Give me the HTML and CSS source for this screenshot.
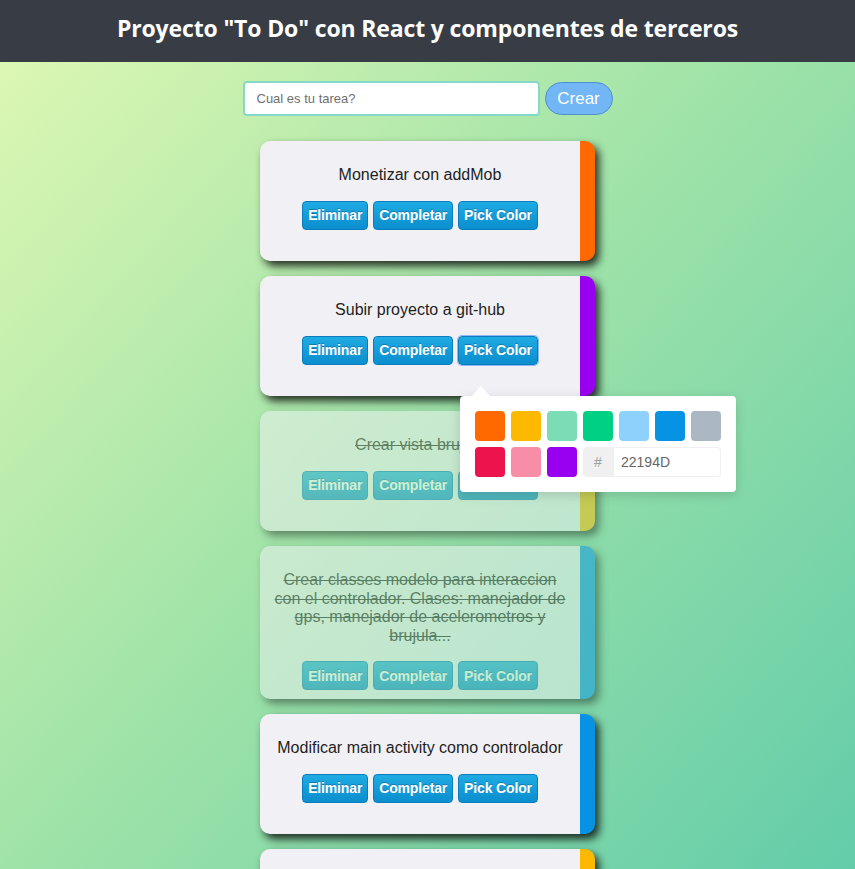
FILE: index.html
```html
<!DOCTYPE html>
<html lang="es">
<head>
<meta charset="utf-8">
<title>To Do</title>
<link rel="stylesheet" href="styles.css">
</head>
<body>
<header class="topbar">
  <h1 class="title">Proyecto "To Do" con React y componentes de terceros</h1>
</header>
<main class="page">
  <form class="new-task">
    <input class="task-input" type="text" placeholder="Cual es tu tarea?">
    <button class="create-btn" type="button">Crear</button>
  </form>
  <ul class="task-list">
    <li class="card" style="border-right-color:#FF6900">
      <p class="card-text">Monetizar con addMob</p>
      <div class="actions">
        <button class="btn" type="button">Eliminar</button>
        <button class="btn" type="button">Completar</button>
        <button class="btn" type="button">Pick Color</button>
      </div>
    </li>
    <li class="card card-open" style="border-right-color:#9900EF">
      <p class="card-text">Subir proyecto a git-hub</p>
      <div class="actions">
        <button class="btn" type="button">Eliminar</button>
        <button class="btn" type="button">Completar</button>
        <button class="btn btn-focus" type="button">Pick Color</button>
      </div>
      <div class="picker">
        <div class="picker-arrow"></div>
        <div class="swatches">
          <span class="swatch" style="background:#FF6900"></span>
          <span class="swatch" style="background:#FCB900"></span>
          <span class="swatch" style="background:#7BDCB5"></span>
          <span class="swatch" style="background:#00D084"></span>
          <span class="swatch" style="background:#8ED1FC"></span>
          <span class="swatch" style="background:#0693E3"></span>
          <span class="swatch" style="background:#ABB8C3"></span>
          <span class="swatch" style="background:#EB144C"></span>
          <span class="swatch" style="background:#F78DA7"></span>
          <span class="swatch" style="background:#9900EF"></span>
          <span class="hex">
            <span class="hash">#</span>
            <input class="hex-input" type="text" value="22194D">
          </span>
        </div>
      </div>
    </li>
    <li class="card card-done" style="border-right-color:#FCB900">
      <p class="card-text">Crear vista brujula</p>
      <div class="actions">
        <button class="btn" type="button">Eliminar</button>
        <button class="btn" type="button">Completar</button>
        <button class="btn" type="button">Pick Color</button>
      </div>
    </li>
    <li class="card card-done" style="border-right-color:#0693E3">
      <p class="card-text">Crear classes modelo para interaccion con el controlador. Clases: manejador de gps, manejador de acelerometros y brujula...</p>
      <div class="actions">
        <button class="btn" type="button">Eliminar</button>
        <button class="btn" type="button">Completar</button>
        <button class="btn" type="button">Pick Color</button>
      </div>
    </li>
    <li class="card" style="border-right-color:#0693E3">
      <p class="card-text">Modificar main activity como controlador</p>
      <div class="actions">
        <button class="btn" type="button">Eliminar</button>
        <button class="btn" type="button">Completar</button>
        <button class="btn" type="button">Pick Color</button>
      </div>
    </li>
    <li class="card" style="border-right-color:#FCB900">
      <p class="card-text">Agregar sensores</p>
      <div class="actions">
        <button class="btn" type="button">Eliminar</button>
        <button class="btn" type="button">Completar</button>
        <button class="btn" type="button">Pick Color</button>
      </div>
    </li>
  </ul>
</main>
</body>
</html>
```

FILE: styles.css
```css
* { box-sizing: border-box; }
html, body { margin: 0; padding: 0; }
body {
  font-family: "Liberation Sans", Arial, sans-serif;
  background: #5ac9aa;
  min-height: 869px;
}
.topbar {
  background: #383c44;
  height: 62px;
  display: flex;
  align-items: center;
  justify-content: center;
}
.title {
  margin: 0;
  color: #fff;
  font-family: "Open Sans", "Noto Sans", sans-serif;
  font-weight: 700;
  font-size: 23px;
  letter-spacing: -0.15px;
  padding-bottom: 7px;
}
.page {
  background: linear-gradient(to bottom right, #dcf7b3 0%, #9de2a8 45%, #5ac9aa 100%);
  min-height: 807px;
  padding: 19px 0 40px;
  display: flex;
  flex-direction: column;
  align-items: center;
}
.new-task {
  display: flex;
  align-items: center;
  gap: 5px;
  margin: 0 0 25px;
}
.task-input {
  width: 297px;
  height: 35px;
  border: 2px solid #86d8c8;
  border-radius: 4px;
  padding: 0 12px;
  font-family: "Liberation Sans", Arial, sans-serif;
  font-size: 13px;
  background: #fff;
  outline: none;
}
.task-input::placeholder { color: #6f6f6f; }
.create-btn {
  width: 68px;
  height: 33px;
  border-radius: 17px;
  border: 1px solid #4f8fd0;
  background: #72b6f6;
  color: #fff;
  font-family: "Liberation Sans", Arial, sans-serif;
  font-size: 17px;
  padding: 0;
}
.task-list {
  list-style: none;
  margin: 0;
  padding: 0;
  display: flex;
  flex-direction: column;
  gap: 15px;
  width: 335px;
}
.card {
  position: relative;
  min-height: 120px;
  background: #f1f1f5;
  border-right: 15px solid #FF6900;
  border-radius: 10px;
  padding: 25px 12px 9px;
  box-shadow: 4px 5px 8px rgba(0, 0, 0, 0.8);
  text-align: center;
}
.card-open { z-index: 2; }
.card-done { opacity: 0.5; }
.card-done .card-text { text-decoration: line-through; }
.card-text {
  margin: 0 0 16px;
  font-size: 16px;
  line-height: 18.6px;
  color: #1e1e1e;
}
.actions {
  display: flex;
  justify-content: center;
  gap: 5px;
}
.btn {
  height: 29px;
  padding: 0 5px;
  border: 1px solid #0b7dbd;
  border-radius: 4px;
  background: linear-gradient(to bottom, #1fabe3 0%, #0b8ece 100%);
  color: #fff;
  font-family: "Liberation Sans", Arial, sans-serif;
  font-weight: 700;
  font-size: 14px;
  letter-spacing: -0.15px;
  text-shadow: 0 -1px 0 rgba(0, 0, 0, 0.25);
}
.btn-focus {
  box-shadow: 0 0 0 1px #8fb8f6;
}
.picker {
  position: absolute;
  top: 100%;
  left: 200px;
  width: 276px;
  background: #fff;
  border-radius: 4px;
  box-shadow: 0 3px 12px rgba(0, 0, 0, 0.15);
  padding: 15px 9px 9px 15px;
  text-align: left;
}
.picker-arrow {
  position: absolute;
  top: -10px;
  left: 12px;
  width: 0;
  height: 0;
  border-style: solid;
  border-width: 0 9px 10px;
  border-color: transparent transparent #fff;
}
.swatches {
  display: flex;
  flex-wrap: wrap;
}
.swatch {
  width: 30px;
  height: 30px;
  border-radius: 4px;
  margin: 0 6px 6px 0;
}
.hex {
  display: flex;
  margin: 0 6px 6px 0;
}
.hash {
  width: 30px;
  height: 30px;
  background: #f0f0f0;
  border-radius: 4px 0 0 4px;
  color: #98a1a4;
  font-size: 14px;
  display: flex;
  align-items: center;
  justify-content: center;
}
.hex-input {
  width: 108px;
  height: 30px;
  border: 0;
  box-shadow: inset 0 0 0 1px #f0f0f0;
  border-radius: 0 4px 4px 0;
  padding: 0 0 0 8px;
  font-family: "Liberation Sans", Arial, sans-serif;
  font-size: 14px;
  color: #666;
  outline: none;
}
```
